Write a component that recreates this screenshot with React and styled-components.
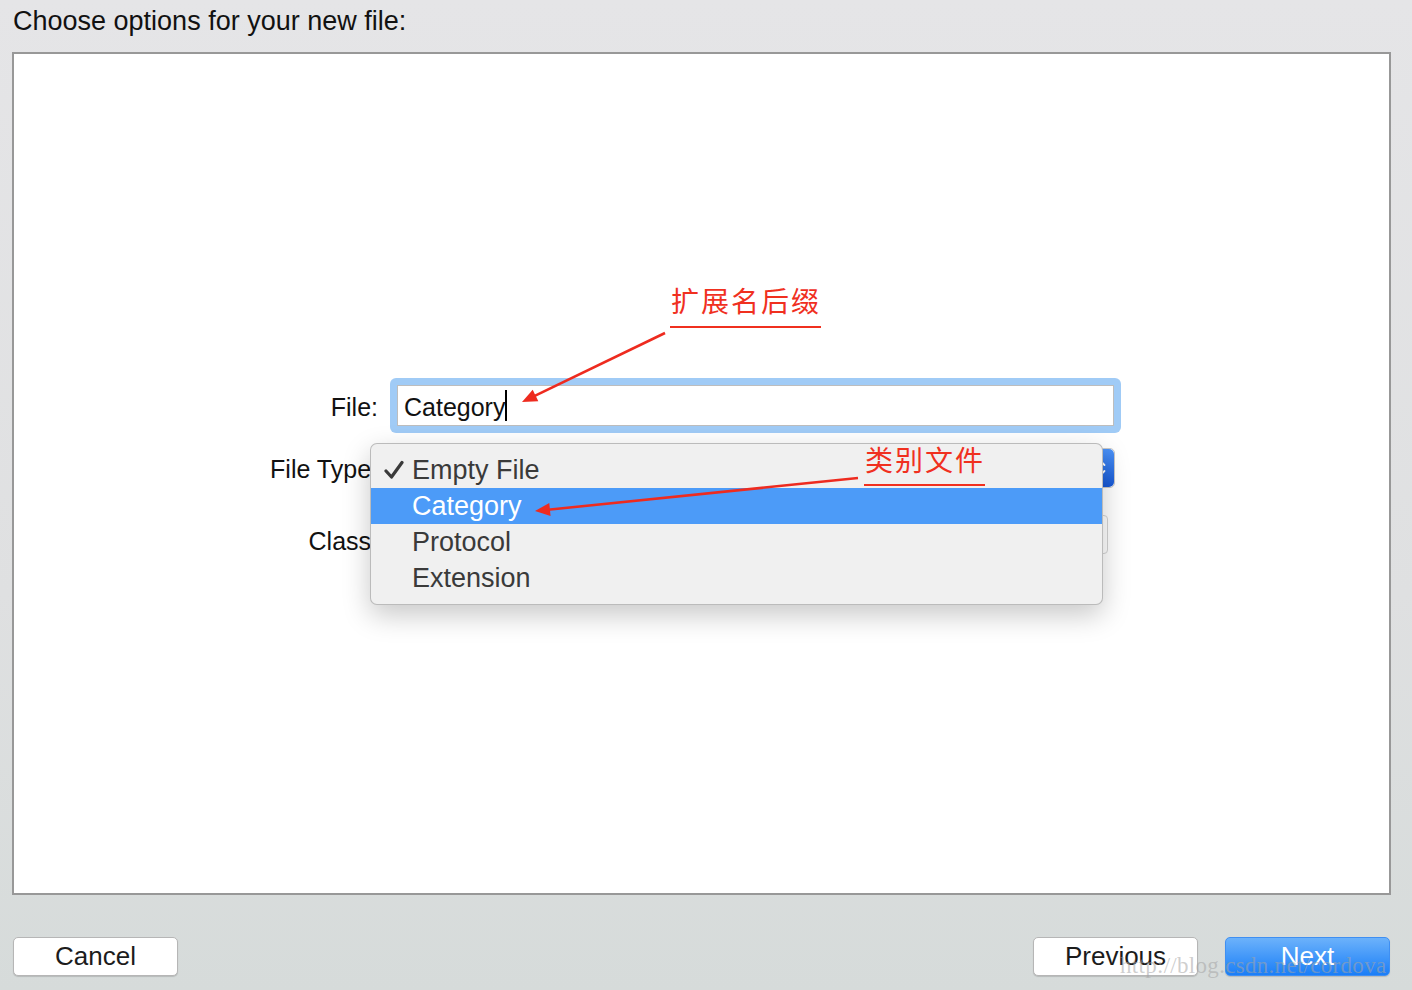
import React from 'react';
import styled, { createGlobalStyle } from 'styled-components';

const GlobalStyle = createGlobalStyle`
    html, body {
        margin: 0;
        padding: 0;
    }
    body {
        font-family: "Liberation Sans", Arial, sans-serif;
    }
`;

const Window = styled.div`
    position: relative;
    width: 1412px;
    height: 990px;
    display: flex;
    flex-direction: column;
    background: linear-gradient(to bottom, #e5e5e7 0%, #dfe0e1 60%, #d6dbda 100%);
    overflow: hidden;
`;

const Title = styled.div`
    box-sizing: border-box;
    height: 52px;
    padding: 6px 0 0 13px;
    font-size: 27px;
    line-height: 30px;
    color: #111;
`;

const Panel = styled.div`
    box-sizing: border-box;
    height: 843px;
    margin: 0 21px 0 12px;
    border: 2px solid #989898;
    background: #fff;
`;

const Form = styled.div`
    display: grid;
    grid-template-columns: 364px 731px;
    column-gap: 12px;
    padding-top: 324px;
`;

const Label = styled.div`
    justify-self: end;
    align-self: center;
    font-size: 25px;
    color: #111;
    margin-top: ${p => p.$top || 0}px;
`;

const FocusRing = styled.div`
    box-sizing: border-box;
    height: 55px;
    padding: 7px;
    border-radius: 6px;
    background: #a0cbf6;
`;

const TextField = styled.div`
    box-sizing: border-box;
    height: 41px;
    display: flex;
    align-items: center;
    padding: 3px 0 0 6px;
    border: 1px solid #bdbdbd;
    background: #fff;
    font-size: 25px;
    color: #111;
`;

const Caret = styled.span`
    display: inline-block;
    width: 2px;
    height: 31px;
    margin-top: -3px;
    background: #000;
`;

const PopupButton = styled.div`
    position: relative;
    box-sizing: border-box;
    width: 725px;
    height: 40px;
    margin-top: 15px;
    border: 1px solid #c9c9c9;
    border-radius: 5px;
    background: #fff;
    display: flex;
    justify-content: flex-end;
`;

const Stepper = styled.div`
    width: 27px;
    height: 100%;
    border-radius: 0 5px 5px 0;
    background: linear-gradient(to bottom, #4b92f7, #1658d6);
    display: flex;
    align-items: center;
    justify-content: center;
`;

const Menu = styled.div`
    position: absolute;
    left: -21px;
    top: -6px;
    z-index: 3;
    box-sizing: border-box;
    width: 733px;
    padding: 8px 0;
    border: 1px solid rgba(0, 0, 0, 0.22);
    border-radius: 7px;
    background: #f0f0f0;
    box-shadow: 0 10px 28px rgba(0, 0, 0, 0.22);
`;

const MenuItem = styled.div`
    height: 36px;
    display: flex;
    align-items: center;
    font-size: 27px;
    color: ${p => (p.$active ? '#fff' : '#3a3a3a')};
    background: ${p => (p.$active ? '#4c9bf8' : 'transparent')};
`;

const CheckCell = styled.span`
    width: 41px;
    display: flex;
    justify-content: center;
    padding-left: 4px;
    box-sizing: border-box;
`;

const ClassField = styled.div`
    box-sizing: border-box;
    width: 718px;
    height: 39px;
    margin-top: 27px;
    border: 1px solid #d4d4d4;
    border-radius: 4px;
    background: #fff;
`;

const Footer = styled.div`
    flex: 1;
    display: flex;
    align-items: flex-end;
    padding: 0 22px 14px 13px;
`;

const Spacer = styled.div`
    flex: 1;
`;

const Button = styled.div`
    box-sizing: border-box;
    width: 165px;
    height: 39px;
    margin-left: ${p => p.$gap || 0}px;
    display: flex;
    align-items: center;
    justify-content: center;
    border-radius: 5px;
    font-size: 26px;
    color: ${p => (p.$primary ? '#fff' : '#1c1c1c')};
    background: ${p => (p.$primary ? 'linear-gradient(to bottom, #6cb2fb, #1a7ef7)' : '#fff')};
    border: 1px solid ${p => (p.$primary ? '#3f8ff2' : '#b6b6b6')};
    box-shadow: 0 1px 1px rgba(0, 0, 0, 0.15);
`;

const Note = styled.div`
    position: absolute;
    left: ${p => p.$x}px;
    top: ${p => p.$y}px;
    z-index: 5;
    padding: 0 0 ${p => p.$pad}px 1px;
    border-bottom: 2px solid #f0301f;
    font-family: "Noto Sans CJK SC", "Noto Sans", sans-serif;
    font-size: 28px;
    line-height: 36px;
    letter-spacing: 2px;
    color: #f0301f;
`;

const Arrows = styled.svg`
    position: absolute;
    left: 0;
    top: 0;
    z-index: 6;
    pointer-events: none;
`;

const Watermark = styled.div`
    position: absolute;
    left: 1120px;
    top: 953px;
    z-index: 7;
    font-family: "Liberation Serif", "Times New Roman", serif;
    font-size: 23px;
    letter-spacing: 0.3px;
    color: rgba(165, 165, 165, 0.55);
    white-space: nowrap;
`;

const items = ['Empty File', 'Category', 'Protocol', 'Extension'];

function Check() {
    return (
        <svg width="20" height="20" viewBox="0 0 20 20">
            <path d="M2 11 L7.5 17 L18 2.5" fill="none" stroke="#3a3a3a" strokeWidth="3.2" strokeLinecap="round" strokeLinejoin="round" />
        </svg>
    );
}

function Arrow({ x1, y1, x2, y2 }) {
    const dx = x2 - x1;
    const dy = y2 - y1;
    const len = Math.hypot(dx, dy);
    const ux = dx / len;
    const uy = dy / len;
    const bx = x2 - ux * 15;
    const by = y2 - uy * 15;
    const px = -uy * 6.5;
    const py = ux * 6.5;
    return (
        <g>
            <line x1={x1} y1={y1} x2={bx + ux * 2} y2={by + uy * 2} stroke="#ee2b1f" strokeWidth="2.6" />
            <polygon points={`${x2},${y2} ${bx + px},${by + py} ${bx - px},${by - py}`} fill="#ee2b1f" />
        </g>
    );
}

class App extends React.Component {
    render() {
        return (
            <Window>
                <GlobalStyle />
                <Title>Choose options for your new file:</Title>
                <Panel>
                    <Form>
                        <Label $top={3}>File:</Label>
                        <FocusRing>
                            <TextField>
                                Category<Caret />
                            </TextField>
                        </FocusRing>

                        <Label $top={17}>File Type:</Label>
                        <PopupButton>
                            <Stepper>
                                <svg width="12" height="22" viewBox="0 0 12 22">
                                    <path d="M2.5 8 L6 4.5 L9.5 8 M2.5 14 L6 17.5 L9.5 14" fill="none" stroke="#fff" strokeWidth="1.8" strokeLinecap="round" strokeLinejoin="round" />
                                </svg>
                            </Stepper>
                            <Menu>
                                {items.map((name, i) => (
                                    <MenuItem key={name} $active={i === 1}>
                                        <CheckCell>{i === 0 ? <Check /> : null}</CheckCell>
                                        {name}
                                    </MenuItem>
                                ))}
                            </Menu>
                        </PopupButton>

                        <Label $top={39}>Class:</Label>
                        <ClassField />
                    </Form>
                </Panel>
                <Footer>
                    <Button>Cancel</Button>
                    <Spacer />
                    <Button>Previous</Button>
                    <Button $primary $gap={27}>Next</Button>
                </Footer>

                <Note $x={670} $y={282} $pad={8}>扩展名后缀</Note>
                <Note $x={864} $y={441} $pad={7}>类别文件</Note>
                <Arrows width="1412" height="990" viewBox="0 0 1412 990">
                    <Arrow x1={665} y1={333} x2={522} y2={402} />
                    <Arrow x1={858} y1={478} x2={535} y2={511} />
                </Arrows>
                <Watermark>http://blog.csdn.net/cordova</Watermark>
            </Window>
        );
    }
}

export default App;
